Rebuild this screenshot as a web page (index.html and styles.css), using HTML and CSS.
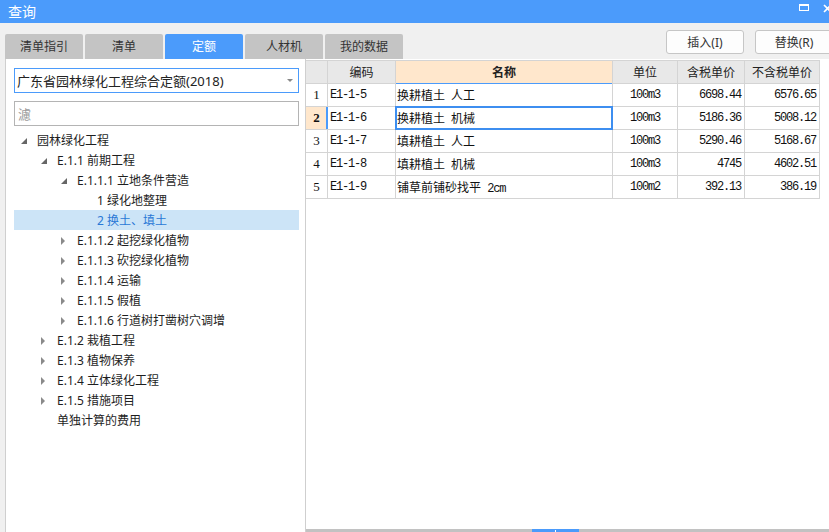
FILE: index.html
```html
<!DOCTYPE html>
<html lang="zh-CN">
<head>
<meta charset="utf-8">
<title>查询</title>
<link rel="stylesheet" href="styles.css">
</head>
<body>
<div class="window">
  <div class="titlebar">
    <span class="title">查询</span>
    <div class="winctl">
      <span class="max"></span>
      <svg class="close" width="9" height="9" viewBox="0 0 9 9"><path d="M1 1 L8 8 M8 1 L1 8" stroke="#fff" stroke-width="1.6" fill="none"/></svg>
    </div>
  </div>
  <div class="toolbar">
    <div class="tabs">
      <div class="tab">清单指引</div>
      <div class="tab">清单</div>
      <div class="tab active">定额</div>
      <div class="tab">人材机</div>
      <div class="tab">我的数据</div>
    </div>
    <div class="actions">
      <button class="btn">插入(I)</button>
      <button class="btn">替换(R)</button>
    </div>
  </div>
  <div class="main">
    <div class="left">
      <div class="select"><span>广东省园林绿化工程综合定额(2018)</span><span class="caret"></span></div>
      <input class="filter" placeholder="濾">
      <ul class="tree">
        <li class="node lvl0"><span class="tog exp"></span><span>园林绿化工程</span></li>
        <li class="node lvl1"><span class="tog exp"></span><span>E.1.1 前期工程</span></li>
        <li class="node lvl2"><span class="tog exp"></span><span>E.1.1.1 立地条件营造</span></li>
        <li class="node lvl3"><span class="tog"></span><span>1 绿化地整理</span></li>
        <li class="node lvl3 sel"><span class="tog"></span><span>2 换土、填土</span></li>
        <li class="node lvl2"><span class="tog col"></span><span>E.1.1.2 起挖绿化植物</span></li>
        <li class="node lvl2"><span class="tog col"></span><span>E.1.1.3 砍挖绿化植物</span></li>
        <li class="node lvl2"><span class="tog col"></span><span>E.1.1.4 运输</span></li>
        <li class="node lvl2"><span class="tog col"></span><span>E.1.1.5 假植</span></li>
        <li class="node lvl2"><span class="tog col"></span><span>E.1.1.6 行道树打凿树穴调增</span></li>
        <li class="node lvl1"><span class="tog col"></span><span>E.1.2 栽植工程</span></li>
        <li class="node lvl1"><span class="tog col"></span><span>E.1.3 植物保养</span></li>
        <li class="node lvl1"><span class="tog col"></span><span>E.1.4 立体绿化工程</span></li>
        <li class="node lvl1"><span class="tog col"></span><span>E.1.5 措施项目</span></li>
        <li class="node lvl1"><span class="tog"></span><span>单独计算的费用</span></li>
      </ul>
    </div>
    <div class="right">
      <div class="grid">
        <div class="c h"></div>
        <div class="c h">编码</div>
        <div class="c h hname">名称</div>
        <div class="c h">单位</div>
        <div class="c h">含税单价</div>
        <div class="c h">不含税单价</div>

        <div class="c num">1</div>
        <div class="c code">E1-1-5</div>
        <div class="c name">换耕植土 人工</div>
        <div class="c unit">100m3</div>
        <div class="c price">6698.44</div>
        <div class="c price">6576.65</div>

        <div class="c num cur">2</div>
        <div class="c code cur">E1-1-6</div>
        <div class="c name focus">换耕植土 机械</div>
        <div class="c unit">100m3</div>
        <div class="c price">5186.36</div>
        <div class="c price">5008.12</div>

        <div class="c num">3</div>
        <div class="c code">E1-1-7</div>
        <div class="c name">填耕植土 人工</div>
        <div class="c unit">100m3</div>
        <div class="c price">5290.46</div>
        <div class="c price">5168.67</div>

        <div class="c num">4</div>
        <div class="c code">E1-1-8</div>
        <div class="c name">填耕植土 机械</div>
        <div class="c unit">100m3</div>
        <div class="c price">4745</div>
        <div class="c price">4602.51</div>

        <div class="c num">5</div>
        <div class="c code">E1-1-9</div>
        <div class="c name"><span>铺草前铺砂找平 <span class="m">2cm</span></span></div>
        <div class="c unit">100m2</div>
        <div class="c price">392.13</div>
        <div class="c price">386.19</div>
      </div>
      <div class="hscroll"><div class="thumb"></div></div>
    </div>
  </div>
</div>
</body>
</html>
```

FILE: styles.css
```css
* { box-sizing: border-box; }

html, body {
  margin: 0;
  padding: 0;
}

body {
  width: 829px;
  height: 532px;
  overflow: hidden;
  background: #f0f0f0;
  font-family: "Noto Sans", "Noto Sans CJK SC", sans-serif;
  font-size: 12px;
  color: #222;
}

.window {
  width: 829px;
  height: 532px;
  display: flex;
  flex-direction: column;
}

/* title bar */
.titlebar {
  height: 23px;
  flex: none;
  background: #4b9bfb;
  display: flex;
  color: #fff;
}

.title {
  padding-left: 8px;
  font-size: 14px;
  line-height: 23px;
}

.winctl {
  margin-left: auto;
  margin-right: -3px;
  padding-top: 4px;
  display: flex;
  align-items: flex-start;
  gap: 14px;
}

.max {
  width: 10px;
  height: 7px;
  border: 1px solid #fff;
  border-top-width: 2px;
}

.close { display: block; }

/* toolbar */
.toolbar {
  height: 36px;
  flex: none;
  display: flex;
}

.tabs {
  display: flex;
  gap: 2px;
  padding: 11px 0 0 5px;
}

.tab {
  width: 78px;
  height: 25px;
  background: #c4c4c4;
  border-radius: 2px 2px 0 0;
  text-align: center;
  line-height: 25px;
  color: #333;
  font-size: 12px;
}

.tab.active {
  background: #4b9bfb;
  color: #fff;
}

.actions {
  margin-left: auto;
  margin-right: -4px;
  padding-top: 7px;
  display: flex;
  align-items: flex-start;
  gap: 11px;
}

.btn {
  width: 78px;
  height: 24px;
  padding: 0;
  background: #fdfdfd;
  border: 1px solid #c6c6c6;
  border-radius: 3px;
  font-family: inherit;
  font-size: 12px;
  color: #333;
}

/* main */
.main {
  flex: 1;
  display: flex;
  min-height: 0;
}

.left {
  width: 301px;
  flex: none;
  margin-left: 5px;
  background: #fff;
  border-left: 1px solid #cfcfcf;
  border-right: 1px solid #cfcfcf;
  padding: 9px 6px 0 8px;
  display: flex;
  flex-direction: column;
}

.select {
  height: 25px;
  border: 1px solid #4b9bfb;
  display: flex;
  align-items: center;
  padding: 0 5px 0 2px;
  font-size: 13px;
  color: #222;
  white-space: nowrap;
}

.caret {
  margin-left: auto;
  width: 0;
  height: 0;
  border-left: 3px solid transparent;
  border-right: 3px solid transparent;
  border-top: 3px solid #888;
}

.filter {
  margin-top: 8px;
  height: 25px;
  width: 100%;
  border: 1px solid #b4b4b4;
  border-radius: 0;
  padding: 0 3px;
  font-family: inherit;
  font-size: 13px;
  color: #222;
  background: #fff;
  outline: none;
}

.filter::placeholder { color: #9c9c9c; }

.tree {
  list-style: none;
  margin: 4px 0 0;
  padding: 0;
}

.node {
  height: 20px;
  display: flex;
  align-items: center;
  white-space: nowrap;
  font-size: 12px;
  line-height: 20px;
  padding-top: 1px;
  color: #1e1e1e;
}

.node.sel {
  background: #cce4f7;
  color: #2a78d6;
}

.lvl1 { padding-left: 20px; }
.lvl2 { padding-left: 40px; }
.lvl3 { padding-left: 60px; }

.tog {
  width: 23px;
  height: 19px;
  flex: none;
  display: flex;
  align-items: center;
}

.tog.exp::before {
  content: "";
  margin-left: 7px;
  width: 0;
  height: 0;
  border-style: solid;
  border-width: 0 0 6px 6px;
  border-color: transparent transparent #666 transparent;
}

.tog.col::before {
  content: "";
  margin-left: 7px;
  margin-top: 1px;
  width: 0;
  height: 0;
  border-style: solid;
  border-width: 4px 0 4px 4px;
  border-color: transparent transparent transparent #8a8a8a;
}

/* right / grid */
.right {
  flex: 1;
  background: #fff;
  padding-top: 1px;
  display: flex;
  flex-direction: column;
  min-width: 0;
}

.grid {
  align-self: flex-start;
  display: grid;
  grid-template-columns: 21px 67px 216px 64px 66px 74px;
  grid-auto-rows: 22px;
  gap: 1px;
  padding: 1px 1px 1px 0;
  background: #d4d4d4;
}

.c {
  background: #fff;
  display: flex;
  align-items: center;
  white-space: nowrap;
  overflow: hidden;
  font-size: 12px;
  color: #111;
}

.h {
  background: #e8e8e8;
  justify-content: center;
  color: #222;
}

.h.hname {
  background: #ffe7cc;
  font-weight: bold;
  box-shadow: 0 1px 0 #4b9bfb;
  overflow: visible;
}

.num {
  justify-content: center;
  font-family: "Liberation Serif", serif;
  font-size: 13px;
}

.num.cur {
  background: #ffe7cc;
  font-weight: bold;
}

.code, .unit, .price, .m {
  font-family: "Liberation Mono", monospace;
  font-size: 12px;
  letter-spacing: -1.2px;
}

.m { word-spacing: 0; }

.code { padding-left: 2px; }

.code.cur {
  box-shadow: -2px 0 0 #4b9bfb;
  overflow: visible;
}

.name {
  padding-left: 1px;
  word-spacing: 3px;
}

.name.focus {
  outline: 2px solid #3d8ef0;
  outline-offset: -1px;
}

.unit { justify-content: center; }

.price {
  justify-content: flex-end;
  padding-right: 3px;
}

.hscroll {
  margin-top: auto;
  height: 3px;
  flex: none;
  background: #c2c2c2;
  display: flex;
}

.thumb {
  margin-left: 226px;
  width: 47px;
  height: 3px;
  background: #4b9bfb;
}

.thumb::after {
  content: "";
  display: block;
  width: 1px;
  height: 2px;
  margin: 1px auto 0;
  background: #fff;
}
```
